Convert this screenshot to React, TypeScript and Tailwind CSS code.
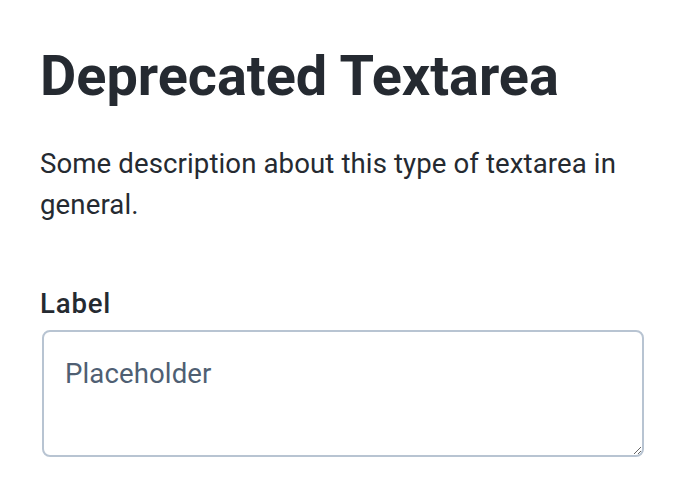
export default function App() {
  return (
    <div className="min-h-[500px] bg-white px-10 pt-[40px] font-['Roboto',sans-serif] text-[#252a31]">
      <h1 className="text-[55.8px] font-bold leading-[72px]">Deprecated Textarea</h1>
      <p className="mt-[31px] text-[27.6px] leading-[41px] tracking-[0.1px] text-[#252a31]">
        Some description about this type of textarea in general.
      </p>
      <label className="mt-[61px] block text-[27.6px] font-medium leading-[36px] tracking-[0.8px]">Label</label>
      <textarea
        placeholder="Placeholder"
        className="mt-[8px] ml-[2px] block h-[127px] w-[602px] rounded-[8px] border-2 border-[#b8c4d2] px-[21px] py-[24px] text-[27.6px] leading-[36px] tracking-[0.1px] text-[#252a31] placeholder:text-[#4f5f73] outline-none"
      />
    </div>
  );
}
